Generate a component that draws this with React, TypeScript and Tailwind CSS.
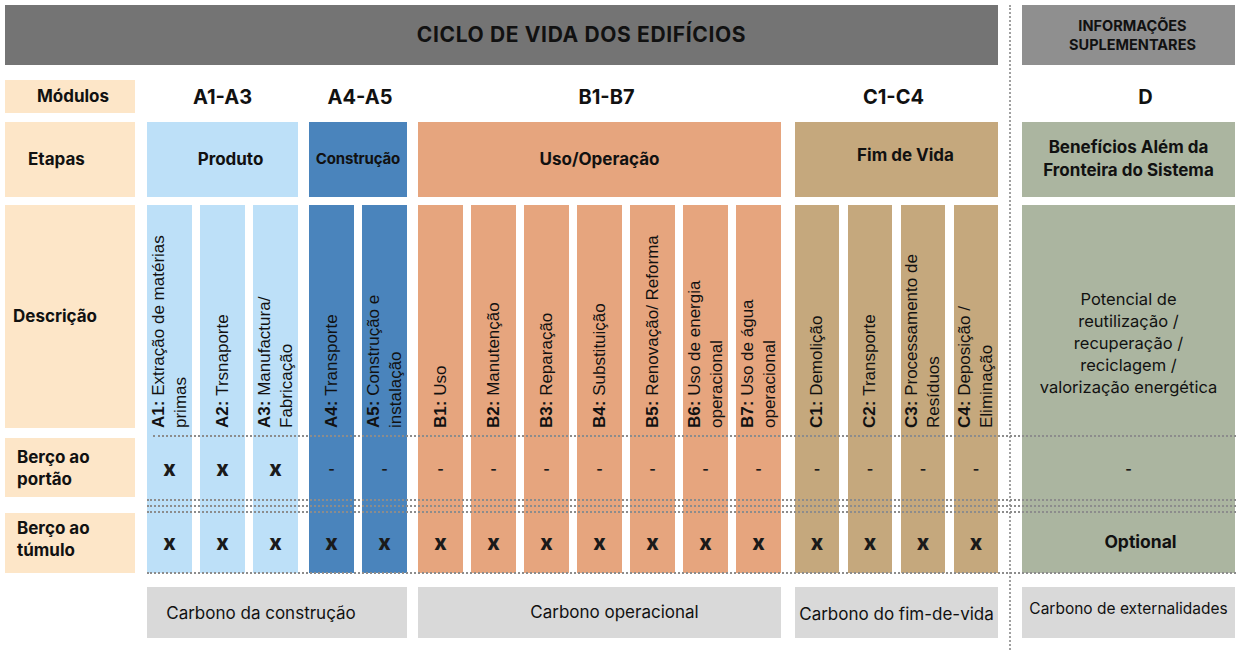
type Col = { code: string; text: string; portao: string; tumulo: string };

type Group = {
  module: string;
  moduleText: string;
  stage: string;
  bg: string;
  width: string;
  ml: string;
  gap: string;
  colW: string;
  stageText: string;
  cols: Col[];
};

const groups: Group[] = [
  {
    module: "A1-A3",
    moduleText: "",
    stage: "Produto",
    bg: "bg-[#bde0f8]",
    width: "w-[151px]",
    ml: "ml-[12px]",
    gap: "gap-[8px]",
    colW: "w-[45px]",
    stageText: "text-[17px] pl-[16px]",
    cols: [
      { code: "A1", text: "Extração de matérias primas", portao: "x", tumulo: "x" },
      { code: "A2", text: "Trsnaporte", portao: "x", tumulo: "x" },
      { code: "A3", text: "Manufactura/ Fabricação", portao: "x", tumulo: "x" },
    ],
  },
  {
    module: "A4-A5",
    moduleText: "pl-[4px]",
    stage: "Construção",
    bg: "bg-[#4a84bc]",
    width: "w-[98px]",
    ml: "ml-[11px]",
    gap: "gap-[8px]",
    colW: "w-[45px]",
    stageText: "text-[15px] tracking-[-0.01em]",
    cols: [
      { code: "A4", text: "Transporte", portao: "-", tumulo: "x" },
      { code: "A5", text: "Construção e instalação", portao: "-", tumulo: "x" },
    ],
  },
  {
    module: "B1-B7",
    moduleText: "pl-[14px]",
    stage: "Uso/Operação",
    bg: "bg-[#e6a57e]",
    width: "w-[363px]",
    ml: "ml-[11px]",
    gap: "gap-[8px]",
    colW: "w-[45px]",
    stageText: "text-[17px]",
    cols: [
      { code: "B1", text: "Uso", portao: "-", tumulo: "x" },
      { code: "B2", text: "Manutenção", portao: "-", tumulo: "x" },
      { code: "B3", text: "Reparação", portao: "-", tumulo: "x" },
      { code: "B4", text: "Substituição", portao: "-", tumulo: "x" },
      { code: "B5", text: "Renovação/ Reforma", portao: "-", tumulo: "x" },
      { code: "B6", text: "Uso de energia operacional", portao: "-", tumulo: "x" },
      { code: "B7", text: "Uso de água operacional", portao: "-", tumulo: "x" },
    ],
  },
  {
    module: "C1-C4",
    moduleText: "pr-[6px]",
    stage: "Fim de Vida",
    bg: "bg-[#c5a87d]",
    width: "w-[203px]",
    ml: "ml-[14px]",
    gap: "gap-[9px]",
    colW: "w-[44px]",
    stageText: "text-[17px] pb-[7px] pl-[18px]",
    cols: [
      { code: "C1", text: "Demolição", portao: "-", tumulo: "x" },
      { code: "C2", text: "Transporte", portao: "-", tumulo: "x" },
      { code: "C3", text: "Processamento de Resíduos", portao: "-", tumulo: "x" },
      { code: "C4", text: "Deposição / Eliminação", portao: "-", tumulo: "x" },
    ],
  },
];

function Mark({ value }: { value: string }) {
  if (value === "-") {
    return <span className="text-[14px] font-bold leading-none text-[#1a1a1a]">-</span>;
  }
  return <span className="text-[21px] font-extrabold leading-none text-[#1a1a1a]">x</span>;
}

function Column({ col, bg, colW }: { col: Col; bg: string; colW: string }) {
  return (
    <div className={`${colW} ${bg} h-full flex flex-col`}>
      {/* Descrição */}
      <div className="h-[232px] flex flex-col items-center justify-end pb-[9px]">
        <div className="[writing-mode:vertical-rl] rotate-180 h-[205px] font-['Liberation_Sans',Arial,sans-serif] text-[17px] leading-[22px] text-[#111]">
          <b>{col.code}:</b> {col.text}
        </div>
      </div>
      {/* Berço ao portão */}
      <div className="h-[63px] flex items-center justify-center">
        <Mark value={col.portao} />
      </div>
      <div className="h-[12px]" />
      {/* Berço ao túmulo */}
      <div className="flex-1 flex items-center justify-center">
        <Mark value={col.tumulo} />
      </div>
    </div>
  );
}

export default function App() {
  return (
    <div className="relative w-[1244px] h-[650px] bg-white flex pt-[5px] pl-[5px] font-['Inter',sans-serif] text-[#111] overflow-hidden">
      {/* Ciclo de vida */}
      <div className="w-[993px] flex flex-col">
        <div className="h-[60px] bg-[#747474] flex items-center justify-center">
          <span className="text-[21px] font-bold tracking-[0.03em] pl-[160px]">CICLO DE VIDA DOS EDIFÍCIOS</span>
        </div>

        {/* Módulos */}
        <div className="mt-[15px] h-[33px] flex">
          <div className="w-[130px] bg-[#fde6c8] flex items-center justify-center pl-[6px]">
            <span className="text-[17px] font-bold">Módulos</span>
          </div>
          {groups.map((g) => (
            <div key={g.module} className={`${g.width} ${g.ml} ${g.moduleText} flex items-center justify-center`}>
              <span className="text-[20px] font-bold">{g.module}</span>
            </div>
          ))}
        </div>

        {/* Etapas */}
        <div className="mt-[9px] h-[75px] flex">
          <div className="w-[130px] bg-[#fde6c8] flex items-center pl-[23px]">
            <span className="text-[17px] font-bold">Etapas</span>
          </div>
          {groups.map((g) => (
            <div key={g.stage} className={`${g.width} ${g.ml} ${g.bg} flex items-center justify-center`}>
              <span className={`${g.stageText} font-bold whitespace-nowrap`}>{g.stage}</span>
            </div>
          ))}
        </div>

        {/* Descrição + cenários */}
        <div className="mt-[8px] h-[368px] flex">
          <div className="w-[130px] flex flex-col">
            <div className="h-[223px] bg-[#fde6c8] flex items-center pl-[8px]">
              <span className="text-[17px] font-bold">Descrição</span>
            </div>
            <div className="mt-[10px] h-[59px] bg-[#fde6c8] flex items-center pl-[12px]">
              <span className="text-[17px] font-bold leading-[22px]">
                Berço ao
                <br />
                portão
              </span>
            </div>
            <div className="mt-[16px] flex-1 bg-[#fde6c8] flex items-start pt-[4px] pl-[12px]">
              <span className="text-[17px] font-bold leading-[22px]">
                Berço ao
                <br />
                túmulo
              </span>
            </div>
          </div>
          {groups.map((g) => (
            <div key={g.module + "-cols"} className={`${g.width} ${g.ml} ${g.gap} flex`}>
              {g.cols.map((c) => (
                <Column key={c.code} col={c} bg={g.bg} colW={g.colW} />
              ))}
            </div>
          ))}
        </div>

        {/* Carbono */}
        <div className="mt-[14px] h-[51px] flex">
          <div className="w-[130px]" />
          <div className="ml-[12px] w-[260px] bg-[#d9d9d9] flex items-center justify-center pr-[32px]">
            <span className="text-[17px] pt-[2px]">Carbono da construção</span>
          </div>
          <div className="ml-[11px] w-[363px] bg-[#d9d9d9] flex items-center justify-center pl-[30px]">
            <span className="text-[17px]">Carbono operacional</span>
          </div>
          <div className="ml-[14px] w-[203px] bg-[#d9d9d9] flex items-center justify-center">
            <span className="text-[17px] pt-[4px]">Carbono do fim-de-vida</span>
          </div>
        </div>
      </div>

      {/* Divisória */}
      <div className="w-[24px] flex justify-center">
        <div className="h-full border-l-2 border-dotted border-[#a0a0a0]" />
      </div>

      {/* Informações suplementares */}
      <div className="w-[213px] flex flex-col">
        <div className="h-[60px] bg-[#8f8f8f] flex items-center justify-center pl-[8px]">
          <span className="text-[14.5px] font-bold leading-[19px] text-center">
            INFORMAÇÕES
            <br />
            SUPLEMENTARES
          </span>
        </div>
        <div className="mt-[15px] h-[33px] flex items-center justify-center pl-[34px]">
          <span className="text-[20px] font-bold">D</span>
        </div>
        <div className="mt-[9px] h-[75px] bg-[#abb5a0] flex items-center justify-center">
          <span className="text-[17px] font-bold leading-[23px] text-center pb-[2px]">
            Benefícios Além da
            <br />
            Fronteira do Sistema
          </span>
        </div>
        <div className="mt-[8px] h-[368px] bg-[#abb5a0] flex flex-col">
          <div className="h-[232px] flex items-center justify-center pt-[44px]">
            <p className="text-[16.5px] leading-[22px] text-center">
              Potencial de
              <br />
              reutilização /
              <br />
              recuperação /
              <br />
              reciclagem /
              <br />
              valorização energética
            </p>
          </div>
          <div className="h-[63px] flex items-center justify-center">
            <Mark value="-" />
          </div>
          <div className="h-[12px]" />
          <div className="flex-1 flex items-center justify-center pl-[24px]">
            <span className="text-[17.5px] font-bold">Optional</span>
          </div>
        </div>
        <div className="mt-[14px] h-[51px] bg-[#d9d9d9] flex items-start justify-center pt-[10px]">
          <span className="text-[15.5px]">Carbono de externalidades</span>
        </div>
      </div>

      {/* Linhas tracejadas sobre as colunas */}
      <div className="absolute top-[435px] left-[153px] w-[1083px] border-t-2 border-dotted border-[#8c8c8c]" />
      <div className="absolute top-[499px] left-[147px] w-[1089px] border-t-2 border-dotted border-[#8c8c8c]" />
      <div className="absolute top-[505px] left-[147px] w-[1089px] border-t-2 border-dotted border-[#8c8c8c]" />
      <div className="absolute top-[511px] left-[147px] w-[1089px] border-t-2 border-dotted border-[#8c8c8c]" />
      <div className="absolute top-[572px] left-[147px] w-[1089px] border-t-2 border-dotted border-[#8c8c8c]" />
    </div>
  );
}
